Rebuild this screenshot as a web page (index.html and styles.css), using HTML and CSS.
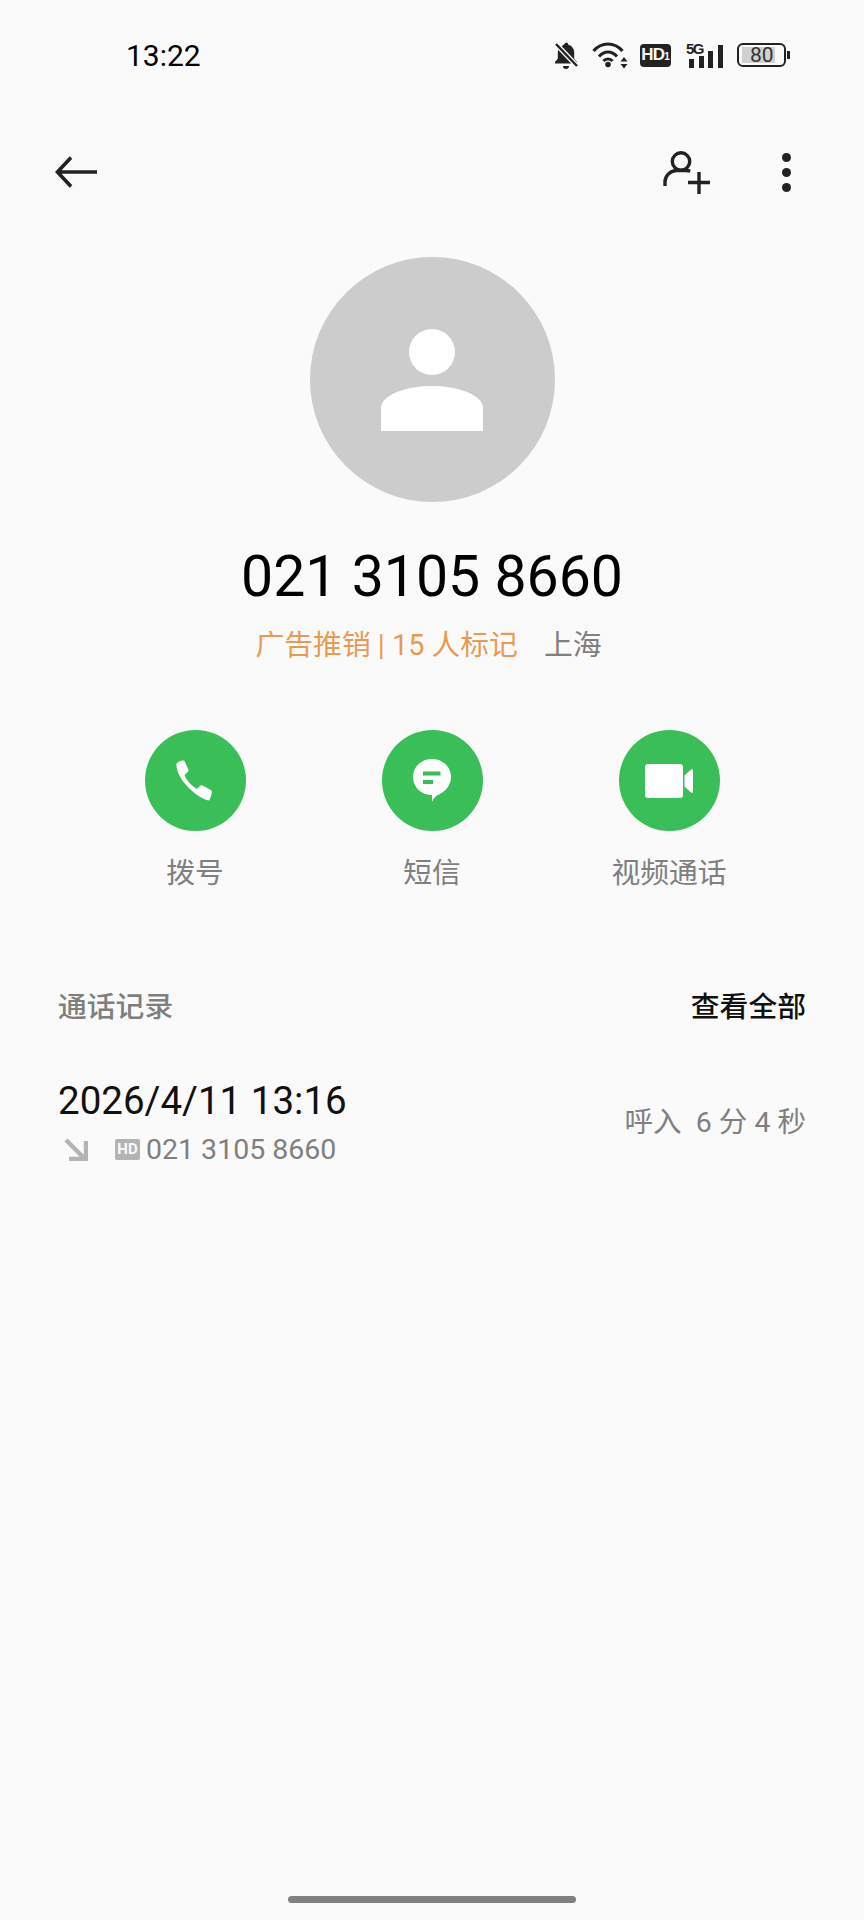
FILE: index.html
```html
<!DOCTYPE html>
<html lang="zh-CN">
<head>
<meta charset="utf-8">
<title>021 3105 8660</title>
<link rel="stylesheet" href="styles.css">
</head>
<body>
<div class="phone">
  <header class="statusbar">
    <span class="time">13:22</span>
    <div class="status-icons">
      <svg class="ic-bell" width="26" height="28" viewBox="0 0 26 28"><path d="M13 1.500c1.300 0 2.200.9 2.300 2.200 3.800 1 5.900 4 5.900 8v6l2.800 3.400v1.400H2v-1.400l2.800-3.400v-6c0-1.200.2-2.400.7-3.500z" fill="#222"/><path d="M10 25h6a3 3 0 0 1-6 0z" fill="#222"/><path d="M3 3l21 22" stroke="#fafafa" stroke-width="5"/><path d="M3 3l21 22" stroke="#222" stroke-width="2.400"/></svg>
      <svg class="ic-wifi" width="36" height="28" viewBox="0 0 36 28"><path d="M1.500 10C5 6 10 3 16 3s11 3 14.500 7M7 15.500C9.300 13 12.500 11 16 11s6.700 2 9 4.500M11.500 20c1.100-1.200 2.700-2 4.500-2s3.400.8 4.500 2" fill="none" stroke="#222" stroke-width="3.200"/><circle cx="16" cy="23.500" r="2.800" fill="#222"/><path d="M32 16l3.500 4.500h-7zM32 27.500l-3.500-4.500h7z" fill="#222"/></svg>
      <div class="hd-badge"><span class="hd-main">HD</span><span class="hd-sub">1</span></div>
      <div class="signal">
        <span class="signal-label">5G</span>
        <i class="bar b1"></i><i class="bar b2"></i><i class="bar b3"></i><i class="bar b4"></i>
      </div>
      <div class="battery">
        <div class="battery-body"><div class="battery-fill"></div><span class="battery-text">80</span></div>
        <i class="battery-nub"></i>
      </div>
    </div>
  </header>

  <nav class="toolbar">
    <svg width="44" height="32" viewBox="0 0 44 32"><path d="M42 16H3M16 1.500L2.500 16 16 30.500" fill="none" stroke="#222" stroke-width="3.600"/></svg>
    <div class="toolbar-right">
      <svg width="48" height="44" viewBox="0 0 48 44"><circle cx="18" cy="11.500" r="8.700" fill="none" stroke="#222" stroke-width="3.400"/><path d="M2 36v-4c0-6 5-11 11-11.500h10c1.600 0 3 .2 4.300.6" fill="none" stroke="#222" stroke-width="3.400"/><path d="M25 32.500h22M36 22v22" stroke="#222" stroke-width="3.400"/></svg>
      <div class="dots"><i></i><i></i><i></i></div>
    </div>
  </nav>

  <section class="profile">
    <div class="avatar">
      <svg width="102" height="102" viewBox="0 0 102 102"><circle cx="51" cy="23" r="23" fill="#fff"/><path d="M0 102V79C0 65 27 57 51 57s51 8 51 22v23z" fill="#fff"/></svg>
    </div>
    <h1 class="number">021 3105 8660</h1>
    <p class="tags"><span class="tag-spam">广告推销 | 15 人标记</span><span class="tag-city">上海</span></p>
  </section>

  <section class="actions">
    <div class="action">
      <div class="action-circle">
        <svg width="44" height="44" viewBox="0 0 44 44"><path d="M3.500 4.500C5 3 7.500 1.800 9.800 1.600c1-.1 1.800.4 2.200 1.300l3.300 7.700c.4.900.2 1.800-.5 2.500l-3.300 3c1.500 4.500 6.700 10.800 12.300 13.900l3.100-3c.7-.7 1.700-.9 2.600-.4l8.200 4.300c1 .5 1.400 1.400 1.200 2.400-.4 2.200-1.300 5-2.600 8.300C22 38.500 2 18 3.500 4.500z" fill="#fff"/></svg>
      </div>
      <span class="action-label">拨号</span>
    </div>
    <div class="action">
      <div class="action-circle">
        <svg width="38" height="44" viewBox="0 0 38 44"><path d="M19 0C29.500 0 38 7.500 38 18c0 9.500-7 15.500-14 18.500-1 .5-3.500 2.500-5 6.500v-7C8.500 36 0 28.500 0 18 0 7.500 8.500 0 19 0z" fill="#fff"/><path d="M10 12.500h17.500v4H10zM10 21h10v4H10z" fill="#3abe58"/></svg>
      </div>
      <span class="action-label">短信</span>
    </div>
    <div class="action">
      <div class="action-circle">
        <svg width="48" height="36" viewBox="0 0 48 36"><path d="M3 1h32a3 3 0 0 1 3 3v28a3 3 0 0 1-3 3H3a3 3 0 0 1-3-3V4a3 3 0 0 1 3-3z" fill="#fff"/><path d="M39.500 12.500L46 6.500c.8-.7 2-.2 2 .9v21.200c0 1.100-1.200 1.600-2 .9l-6.500-6z" fill="#fff"/></svg>
      </div>
      <span class="action-label">视频通话</span>
    </div>
  </section>

  <section class="history">
    <div class="history-head">
      <span class="history-title">通话记录</span>
      <span class="history-all">查看全部</span>
    </div>
    <div class="call">
      <div class="call-main">
        <div class="call-date">2026/4/11 13:16</div>
        <div class="call-sub">
          <svg class="call-arrow" width="24" height="24" viewBox="0 0 24 24"><path d="M2 3l18 18M22 4v18H5" fill="none" stroke="#b3b3b3" stroke-width="4.500"/></svg>
          <span class="call-hd">HD</span>
          <span class="call-number">021 3105 8660</span>
        </div>
      </div>
      <div class="call-info">呼入&nbsp; 6 分 4 秒</div>
    </div>
  </section>

  <div class="homebar"></div>
</div>
</body>
</html>
```

FILE: styles.css
```css
* { box-sizing: border-box; }
html, body { margin: 0; padding: 0; }
body {
  background: #fafafa;
  font-family: Roboto, "Noto Sans CJK SC", sans-serif;
  color: #000;
}
.phone {
  width: 864px;
  height: 1920px;
  display: flex;
  flex-direction: column;
  overflow: hidden;
}
.statusbar {
  height: 110px;
  padding: 0 74px 0 126px;
  display: flex;
  align-items: center;
  justify-content: space-between;
}
.time { font-size: 30px; color: #000; }
.status-icons { display: flex; align-items: center; }
.ic-bell { margin-right: 13px; }
.ic-wifi { margin-right: 12px; }
.hd-badge {
  width: 31px;
  height: 23px;
  background: #222;
  border-radius: 4px;
  color: #fafafa;
  display: flex;
  align-items: baseline;
  justify-content: center;
  font-family: "Liberation Sans", sans-serif;
  font-weight: 700;
  line-height: 22px;
  margin-right: 15px;
}
.hd-main { font-size: 17px; letter-spacing: -0.8px; }
.hd-sub { font-size: 10px; }
.signal {
  position: relative;
  width: 38px;
  height: 25px;
  padding-left: 3px;
  display: flex;
  align-items: flex-end;
  gap: 4.500px;
  margin-right: 13px;
}
.signal-label {
  position: absolute;
  left: 0;
  top: -3px;
  font-family: "Liberation Sans", sans-serif;
  font-weight: 700;
  font-size: 15px;
  letter-spacing: -1.500px;
  color: #222;
}
.bar { display: block; width: 5px; background: #222; }
.b1 { height: 9px; }
.b2 { height: 12px; }
.b3 { height: 17px; }
.b4 { height: 23px; }
.battery { display: flex; align-items: center; gap: 1px; }
.battery-body {
  position: relative;
  width: 49px;
  height: 24px;
  border: 2px solid #222;
  border-radius: 6px;
  padding: 2px 3px;
}
.battery-fill { width: 33px; height: 100%; background: #d0d0d0; }
.battery-text {
  position: absolute;
  left: 11px;
  top: 0;
  font-size: 21px;
  line-height: 20px;
  color: #333;
}
.battery-nub { display: block; width: 3px; height: 8px; background: #222; }

.toolbar {
  height: 124px;
  padding: 0 73px 0 55px;
  display: flex;
  align-items: center;
  justify-content: space-between;
}
.toolbar-right { display: flex; align-items: center; gap: 71px; }
.dots { display: flex; flex-direction: column; gap: 6px; }
.dots i { display: block; width: 9px; height: 9px; border-radius: 50%; background: #222; }

.profile {
  margin-top: 23px;
  display: flex;
  flex-direction: column;
  align-items: center;
}
.avatar {
  width: 245px;
  height: 245px;
  border-radius: 50%;
  background: #ccc;
  display: flex;
  justify-content: center;
  padding-top: 72px;
}
.number {
  margin: 40px 0 0;
  font-size: 57.200px;
  font-weight: 400;
  line-height: 70px;
  color: #000;
}
.tags {
  margin: 13px 7px 0 0;
  font-size: 28.800px;
  line-height: 40px;
  display: flex;
  gap: 26px;
}
.tag-spam { color: #ea9a50; }
.tag-city { color: #808080; }

.actions {
  margin-top: 65px;
  padding: 0 76.500px;
  display: grid;
  grid-template-columns: repeat(3, 1fr);
}
.action {
  display: flex;
  flex-direction: column;
  align-items: center;
}
.action-circle {
  width: 101px;
  height: 101px;
  border-radius: 50%;
  background: #3abe58;
  display: flex;
  align-items: center;
  justify-content: center;
}
.action-label {
  margin-top: 22px;
  font-size: 28.800px;
  line-height: 40px;
  color: #7f7f7f;
}

.history { margin-top: 91px; padding: 0 58px; }
.history-head {
  display: flex;
  align-items: center;
  justify-content: space-between;
  height: 40px;
  font-size: 28.800px;
}
.history-title { color: #7f7f7f; font-weight: 500; }
.history-all { color: #111; font-weight: 500; }
.call {
  margin-top: 54px;
  display: flex;
  align-items: center;
  justify-content: space-between;
}
.call-date { font-size: 38.500px; line-height: 46px; color: #111; }
.call-sub { margin-top: 7px; display: flex; align-items: center; height: 36px; }
.call-arrow { margin-left: 6px; }
.call-hd {
  margin-left: 27px;
  width: 25px;
  height: 21px;
  border-radius: 2px;
  background: #b3b3b3;
  color: #fafafa;
  font-size: 15px;
  font-weight: 700;
  line-height: 21px;
  text-align: center;
}
.call-number { margin-left: 6px; font-size: 28.500px; color: #808080; }
.call-info { font-size: 28.500px; color: #808080; margin-bottom: 6px; }

.homebar {
  margin: auto auto 17px;
  width: 288px;
  height: 7px;
  border-radius: 4px;
  background: #808080;
}
```
